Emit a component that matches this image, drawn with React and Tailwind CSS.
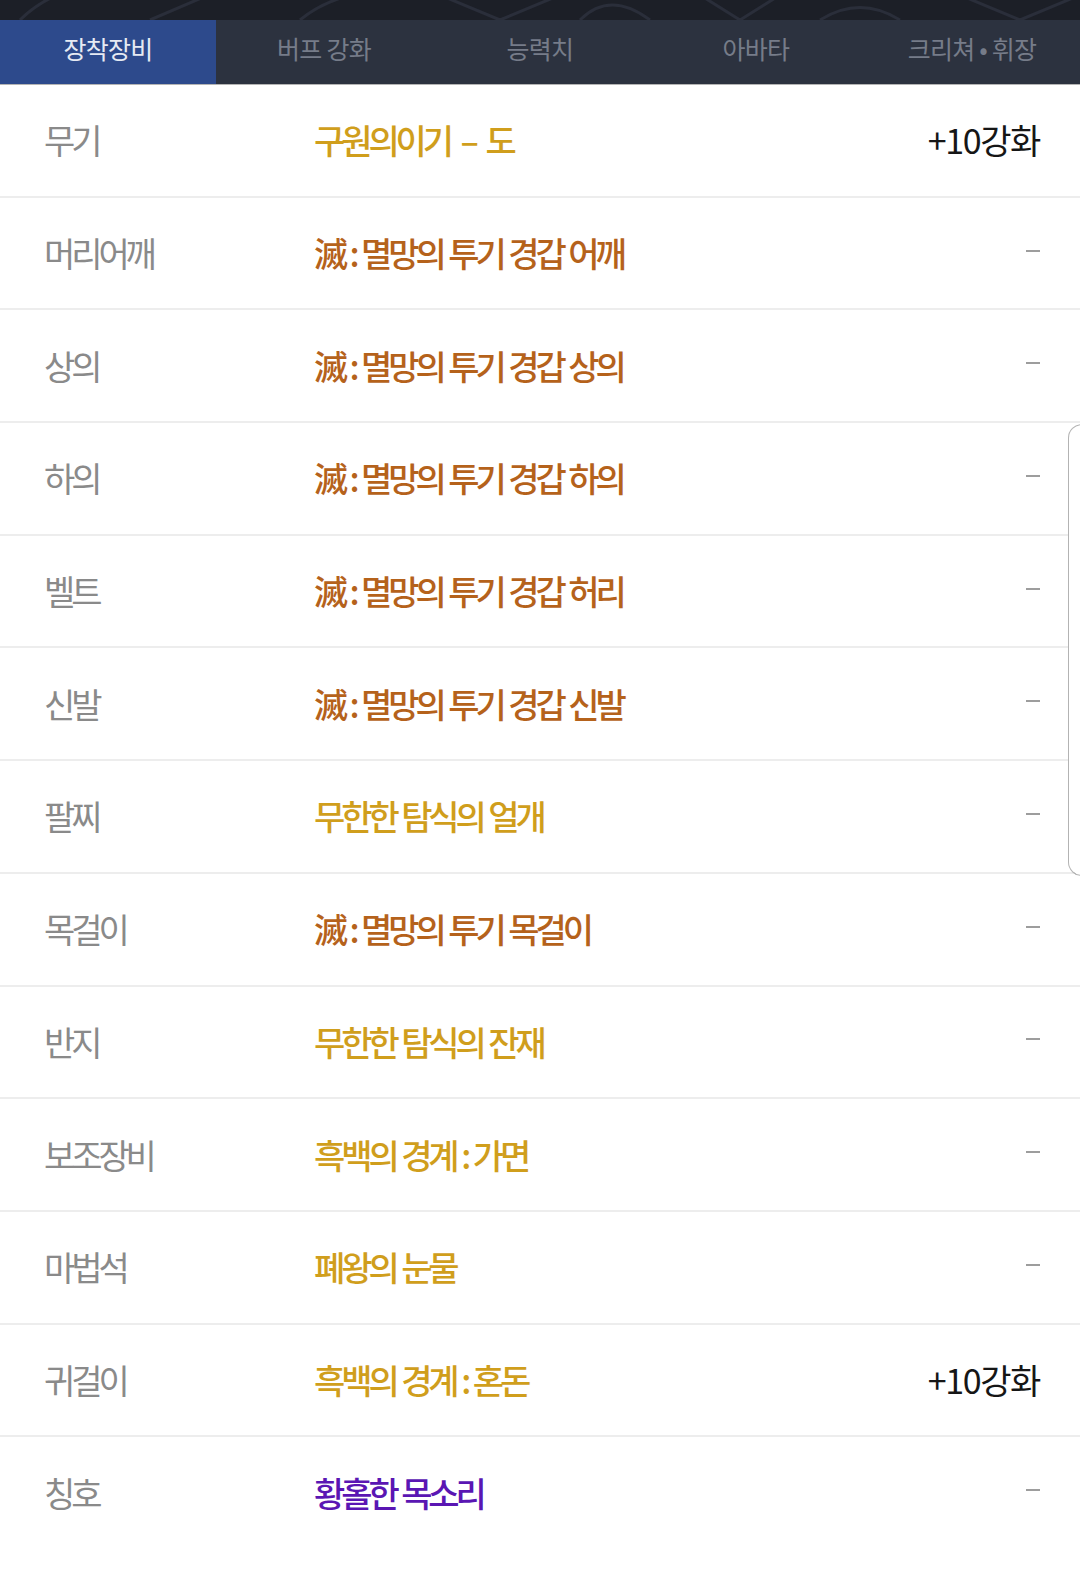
import React from "react";

const GOLD = "text-[#d09e1c]";
const ORANGE = "text-[#b5621b]";
const PURPLE = "text-[#5a16b3]";

const rows = [
  { label: "무기", name: "구원의이기 – 도", color: GOLD, right: "+10강화", ws: "[word-spacing:7px]" },
  { label: "머리어깨", name: "滅 : 멸망의 투기 경갑 어깨", color: ORANGE },
  { label: "상의", name: "滅 : 멸망의 투기 경갑 상의", color: ORANGE },
  { label: "하의", name: "滅 : 멸망의 투기 경갑 하의", color: ORANGE },
  { label: "벨트", name: "滅 : 멸망의 투기 경갑 허리", color: ORANGE },
  { label: "신발", name: "滅 : 멸망의 투기 경갑 신발", color: ORANGE },
  { label: "팔찌", name: "무한한 탐식의 얼개", color: GOLD },
  { label: "목걸이", name: "滅 : 멸망의 투기 목걸이", color: ORANGE },
  { label: "반지", name: "무한한 탐식의 잔재", color: GOLD },
  { label: "보조장비", name: "흑백의 경계 : 가면", color: GOLD },
  { label: "마법석", name: "폐왕의 눈물", color: GOLD },
  { label: "귀걸이", name: "흑백의 경계 : 혼돈", color: GOLD, right: "+10강화" },
  { label: "칭호", name: "황홀한 목소리", color: PURPLE },
];

const tabs = ["장착장비", "버프 강화", "능력치", "아바타", "크리쳐 • 휘장"];

export default function App() {
  return (
    <div
      className="relative w-[1080px] min-h-[1578px] bg-white overflow-hidden"
      style={{ fontFamily: '"Noto Sans CJK KR", "Noto Sans", sans-serif' }}
    >
      {/* dark banner strip */}
      <div className="h-[20px] bg-[#1c1f27] overflow-hidden">
        <svg width="1080" height="20" viewBox="0 0 1080 20" fill="none" stroke="#2a2e3a" strokeWidth="3">
          <path d="M20 20 Q40 0 70 -10" />
          <path d="M150 20 L220 -10" />
          <path d="M300 20 Q330 -5 380 -10" />
          <path d="M440 -5 L500 20 L560 -5" />
          <path d="M580 20 Q610 -10 650 20" />
          <path d="M700 -5 L740 20 L780 -5" />
          <path d="M820 20 Q860 -5 900 20" />
          <path d="M960 -5 L1020 20 L1080 -5" />
        </svg>
      </div>

      {/* tabs */}
      <div className="flex h-[65px] border-b border-[#b4b4b4]">
        {tabs.map((t, i) => (
          <div
            key={t}
            className={
              i === 0
                ? "w-[216px] flex items-center justify-center pb-[7px] bg-[#2d4a8c] text-[#e6eaf3] text-[25px] tracking-[-0.03em] whitespace-pre"
                : "w-[216px] flex items-center justify-center pb-[7px] bg-[#2c323f] text-[#767c89] text-[25px] tracking-[-0.03em] whitespace-pre"
            }
          >
            {t}
          </div>
        ))}
      </div>

      {/* rows */}
      <div className="flex flex-col">
        {rows.map((r, i) => (
          <div
            key={r.label}
            className={
              i === rows.length - 1
                ? "flex items-center h-[110.7px] pl-[44px] pr-[40px]"
                : "flex items-center h-[112.7px] pl-[44px] pr-[40px] border-b-2 border-[#ededed]"
            }
          >
            <div className="w-[270px] text-[34px] leading-none text-[#8a8a8a] tracking-[-0.12em] whitespace-nowrap">
              {r.label}
            </div>
            <div
              className={`flex-1 text-[34px] leading-none font-medium tracking-[-0.12em] whitespace-pre ${r.ws ? r.ws : "[word-spacing:2px]"} ${r.color}`}
            >
              {r.name}
            </div>
            {r.right ? (
              <div className="text-[34px] leading-none text-[#161616] tracking-[-0.04em] whitespace-nowrap">
                {r.right}
              </div>
            ) : (
              <div className="w-[14px] h-[2px] bg-[#9d9d9d] mb-[5px]" />
            )}
          </div>
        ))}
      </div>

      {/* side scroll handle */}
      <div className="absolute right-[-2px] top-[424px] w-[14px] h-[452px] rounded-l-[14px] border-[1.5px] border-[#b3b3b3] bg-white" />
    </div>
  );
}
